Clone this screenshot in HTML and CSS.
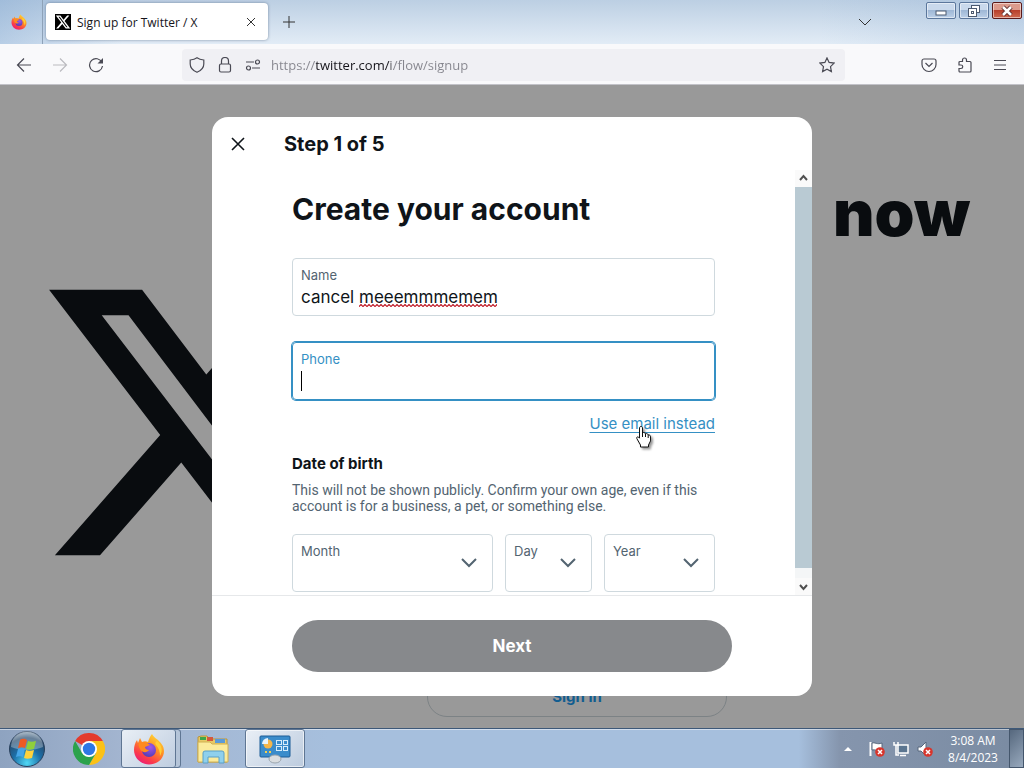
FILE: index.html
```html
<!DOCTYPE html>
<html lang="en">
<head>
    <meta charset="UTF-8">
    <meta name="viewport" content="width=device-width, initial-scale=1.0">
    <title>Sign up for Twitter / X</title>
    <link rel="stylesheet" href="styles.css">
</head>
<body>
    <!-- shared icon shapes -->
    <svg class="defs" width="0" height="0" aria-hidden="true">
        <defs>
            <linearGradient id="foxBody" x1="0.8" y1="0" x2="0.2" y2="1">
                <stop offset="0" stop-color="#ffde3a"/>
                <stop offset="0.4" stop-color="#ff9223"/>
                <stop offset="0.75" stop-color="#fb3b4b"/>
                <stop offset="1" stop-color="#e8177f"/>
            </linearGradient>
            <radialGradient id="foxGlobe" cx="0.6" cy="0.3" r="0.8">
                <stop offset="0" stop-color="#a256e8"/>
                <stop offset="1" stop-color="#4a3bb0"/>
            </radialGradient>
            <pattern id="wave" width="4" height="3" patternUnits="userSpaceOnUse">
                <path d="M-1 1.500L0 2.500 2 .5l2 2 1-1" fill="none" stroke="#c01c28" stroke-width="1.200"/>
            </pattern>
            <symbol id="firefox" viewBox="0 0 32 32">
                <path fill="url(#foxBody)" d="M19 1c1 2 3 4 6 6 3 3 6 6 6 11 0 8-7 13.500-15 13.500S1 25 1 17c0-4 1-7 3-10l1 3 2-5 2 4c2-1 4-1 6 0 1-3 2-6 4-8z"/>
                <circle cx="16" cy="17" r="7" fill="url(#foxGlobe)"/>
                <path fill="#ff8a1f" d="M6 10c4-2 8-1 11 2l-5 2c0 2 2 3 4 3-2 3-7 3-9-1-1-2-2-4-1-6z"/>
                <path fill="#ffcf35" d="M24 8c5 4 6 10 3 15 0-4-1-8-4-11-1-1-1-3 1-4z"/>
            </symbol>
            <symbol id="xlogo" viewBox="0 0 24 24">
                <path d="M18.244 2.250h3.308l-7.227 8.260 8.502 11.240H16.170l-5.214-6.817L4.990 21.750H1.680l7.730-8.835L1.254 2.250H8.080l4.713 6.231zm-1.161 17.520h1.833L7.084 4.126H5.117z"/>
            </symbol>
        </defs>
    </svg>

    <header class="tabstrip">
        <button class="view-btn" aria-label="Firefox View">
            <svg width="16" height="16"><use href="#firefox"/></svg>
        </button>
        <div class="tab">
            <svg class="favicon" width="16" height="16"><use href="#xlogo"/></svg>
            <span class="tab-title">Sign up for Twitter / X</span>
            <button class="tab-close" aria-label="Close tab">
                <svg class="line" width="10" height="10" viewBox="0 0 10 10"><path d="M1 1l8 8M9 1L1 9"/></svg>
            </button>
        </div>
        <button class="new-tab" aria-label="New tab">
            <svg class="line" width="12" height="12" viewBox="0 0 12 12"><path d="M6 0v12M0 6h12"/></svg>
        </button>
        <button class="all-tabs" aria-label="List all tabs">
            <svg class="line" width="14" height="8" viewBox="0 0 14 8"><path d="M1 1l6 6 6-6"/></svg>
        </button>
        <div class="window-btns">
            <button aria-label="Minimize">
                <svg width="12" height="12" viewBox="0 0 12 12"><rect x="1" y="6" width="10" height="4" fill="#fff" stroke="#4c5a70"/></svg>
            </button>
            <button aria-label="Restore">
                <svg width="14" height="12" viewBox="0 0 14 12"><g fill="#fff" stroke="#4c5a70"><rect x="4.500" y="0.500" width="8" height="7"/><rect x="1.500" y="3.500" width="8" height="8"/><rect x="4.500" y="6.500" width="2" height="2"/></g></svg>
            </button>
            <button class="close" aria-label="Close">
                <svg width="14" height="12" viewBox="0 0 14 12"><path d="M3 2l8 8M11 2l-8 8" stroke="#5b2a2a" stroke-width="4.500"/><path d="M3 2l8 8M11 2l-8 8" stroke="#fff" stroke-width="2.500"/></svg>
            </button>
        </div>
    </header>

    <nav class="toolbar">
        <div class="nav-btns">
            <button aria-label="Back">
                <svg width="16" height="16" viewBox="0 0 16 16"><path d="M15 8H1M8 1.500L1.500 8 8 14.500"/></svg>
            </button>
            <button aria-label="Forward" disabled>
                <svg width="16" height="16" viewBox="0 0 16 16"><path d="M1 8h14M8 1.500L14.500 8 8 14.500"/></svg>
            </button>
            <button aria-label="Reload">
                <svg width="16" height="16" viewBox="0 0 16 16"><path d="M14 5.500A6.500 6.500 0 1 0 14.500 9"/><path d="M15 1v5.500H9.500z" fill="#4a4a54" stroke="none"/></svg>
            </button>
        </div>
        <div class="urlbar">
            <svg width="16" height="16" viewBox="0 0 16 16"><path d="M8 0.800C6 2.300 4 2.800 1.200 3v4c0 4 2.500 6.500 6.800 8.300C12.300 13.500 14.800 11 14.800 7V3C12 2.800 10 2.300 8 0.800z"/></svg>
            <svg width="16" height="16" viewBox="0 0 16 16"><rect x="2.500" y="7" width="11" height="8" rx="1.500"/><path d="M4.500 7V4a3.500 3.500 0 0 1 7 0v3"/></svg>
            <svg width="16" height="16" viewBox="0 0 16 16"><path d="M1 5h8M7 11h8"/><circle cx="12.500" cy="5" r="2"/><circle cx="3.500" cy="11" r="2"/></svg>
            <input class="url" type="text" aria-label="Address" value="https://twitter.com/i/flow/signup">
            <button aria-label="Bookmark this page">
                <svg width="16" height="16" viewBox="0 0 16 16"><path d="M8 0.900l2.100 4.500 5 .7-3.600 3.500.9 5L8 12.200l-4.400 2.400.9-5L.9 6.100l5-.7z"/></svg>
            </button>
        </div>
        <div class="tool-btns">
            <button aria-label="Save to Pocket">
                <svg width="16" height="16" viewBox="0 0 16 16"><path d="M3 2h10a2 2 0 0 1 2 2v3.500a7 7 0 0 1-14 0V4a2 2 0 0 1 2-2z"/><path d="M4.500 6L8 9.500 11.500 6"/></svg>
            </button>
            <button aria-label="Extensions">
                <svg width="16" height="16" viewBox="0 0 16 16"><path d="M5.500 4.500V3a2 2 0 0 1 4 0v1.500H13a1 1 0 0 1 1 1V14a1 1 0 0 1-1 1H3a1 1 0 0 1-1-1v-2.500h2a1.700 1.700 0 0 0 0-3.500H2V5.500a1 1 0 0 1 1-1z"/></svg>
            </button>
            <button aria-label="Menu">
                <svg width="14" height="16" viewBox="0 0 14 16"><path d="M1 3.500h12M1 8h12M1 12.500h12"/></svg>
            </button>
        </div>
    </nav>

    <main class="page">
        <div class="landing">
            <svg class="landing-logo" width="327" height="327"><use href="#xlogo"/></svg>
            <div class="landing-side">
                <h1>now</h1>
                <a class="signin" href="#">Sign in</a>
            </div>
        </div>

        <div class="mask">
            <form class="modal">
                <div class="modal-header">
                    <button class="modal-close" type="button" aria-label="Close">
                        <svg width="14" height="14" viewBox="0 0 14 14"><path d="M1 1l12 12M13 1L1 13"/></svg>
                    </button>
                    <h2>Step 1 of 5</h2>
                </div>

                <div class="modal-body">
                    <div class="modal-content">
                        <h3>Create your account</h3>

                        <div class="field">
                            <label for="name">Name</label>
                            <input id="name" type="text" value="cancel meeemmmemem" spellcheck="false">
                            <svg class="misspelled" width="138" height="3"><rect width="138" height="3" fill="url(#wave)"/></svg>
                        </div>

                        <div class="field active">
                            <label for="phone">Phone</label>
                            <input id="phone" type="tel">
                            <span class="caret"></span>
                        </div>

                        <div class="switch">
                            <a href="#">Use email instead</a>
                            <svg class="pointer" width="20" height="24" viewBox="0 0 20 24">
                                <path d="M6 1.500c1 0 1.500.6 1.500 1.500v5l1-.5c1 0 1.700.4 1.900 1.200 1.500-.4 2.400.1 2.700 1.200 1.500-.3 2.400.6 2.400 2v4L13.500 20v2h-8v-2L1.800 13.500c-.6-1.200.8-2.300 1.900-1.200l.8.900V3c0-.9.500-1.500 1.500-1.500z" fill="#fff" stroke="#111"/>
                                <path d="M7.500 8v4M10.500 9v3M13.200 10v3" stroke="#111" fill="none"/>
                            </svg>
                        </div>

                        <h4>Date of birth</h4>
                        <p>This will not be shown publicly. Confirm your own age, even if this account is for a business, a pet, or something else.</p>

                        <div class="dob">
                            <div class="select">
                                <label for="month">Month</label>
                                <select id="month"><option></option></select>
                                <svg width="18" height="10" viewBox="0 0 18 10"><path d="M2 1l7 7 7-7"/></svg>
                            </div>
                            <div class="select">
                                <label for="day">Day</label>
                                <select id="day"><option></option></select>
                                <svg width="18" height="10" viewBox="0 0 18 10"><path d="M2 1l7 7 7-7"/></svg>
                            </div>
                            <div class="select">
                                <label for="year">Year</label>
                                <select id="year"><option></option></select>
                                <svg width="18" height="10" viewBox="0 0 18 10"><path d="M2 1l7 7 7-7"/></svg>
                            </div>
                        </div>
                    </div>
                    <div class="scrollbar">
                        <svg width="17" height="17" viewBox="0 0 17 17"><path d="M5 10l3.500-4 3.500 4"/></svg>
                        <div class="thumb"></div>
                        <svg width="17" height="17" viewBox="0 0 17 17"><path d="M5 7l3.500 4L12 7"/></svg>
                    </div>
                </div>

                <div class="modal-footer">
                    <button class="next" type="button">Next</button>
                </div>
            </form>
        </div>
    </main>

    <footer class="taskbar">
        <button class="start" aria-label="Start">
            <svg width="38" height="38" viewBox="0 0 38 38">
                <defs>
                    <radialGradient id="orb" cx="0.5" cy="0.9" r="0.9">
                        <stop offset="0" stop-color="#4fd8f5"/>
                        <stop offset="0.45" stop-color="#1c6fa8"/>
                        <stop offset="0.8" stop-color="#274a6c"/>
                        <stop offset="1" stop-color="#8fa5b8"/>
                    </radialGradient>
                </defs>
                <circle cx="19" cy="19" r="17.500" fill="url(#orb)" stroke="#28405c"/>
                <path d="M3 17a16 16 0 0 1 32 0c-9 4-23 4-32 0z" fill="#fff" opacity="0.300"/>
                <path d="M12 10c3-2 5-1 7 0l-2 8c-2-1-4-1-7 0z" fill="#ee5a24"/>
                <path d="M20 11c2 1 5 1 8 0l-2 8c-3 1-6 1-8 0z" fill="#8fcf3c"/>
                <path d="M10 19c3-1 5-1 7 0l-2 8c-2-1-5-1-7 0z" fill="#45a6e8"/>
                <path d="M18 20c2 1 5 1 8 0l-2 8c-3 1-6 1-8 0z" fill="#ffd23c"/>
            </svg>
        </button>
        <button class="task" aria-label="Chrome">
            <svg width="32" height="32" viewBox="0 0 32 32">
                <path fill="#e33b2e" d="M16 16L2.140 8A16 16 0 0 1 29.860 8H16z"/>
                <path fill="#fbc116" d="M16 8h13.860A16 16 0 0 1 16 32l7-12z"/>
                <path fill="#2ba24c" d="M2.140 8A16 16 0 0 0 16 32l7-12-7 4-7-4z"/>
                <circle cx="16" cy="16" r="8" fill="#fff"/>
                <circle cx="16" cy="16" r="6.200" fill="#2e77e5"/>
            </svg>
        </button>
        <button class="task open stacked" aria-label="Firefox">
            <svg width="32" height="32"><use href="#firefox"/></svg>
        </button>
        <button class="task" aria-label="File Explorer">
            <svg width="34" height="32" viewBox="0 0 34 32">
                <path d="M2 29V4l3-1h6l2 3h18v23z" fill="#e8c964" stroke="#b9953c"/>
                <path d="M4 4h6v3H4z" fill="#3fa64a"/><path d="M11 4h6v4h-6z" fill="#d4583c"/><path d="M19 6h10v4H19z" fill="#5b9bd8"/>
                <path d="M2 9h12l2 2h16v18H2z" fill="#fbeb9c" stroke="#d0b053"/>
                <path d="M7 30V20q0-2 2-2h17q2 0 2 2v10h-5v-6H12v6z" fill="#8fd0ec" stroke="#5aa0c8"/>
            </svg>
        </button>
        <button class="task open" aria-label="Control Panel">
            <svg width="34" height="30" viewBox="0 0 34 30">
                <rect x="2" y="2" width="30" height="21" rx="1" fill="#3a8ccb" stroke="#1d5c96"/>
                <circle cx="10" cy="10" r="4.500" fill="#f4b64a"/><path d="M10 10V4a6 6 0 0 0-6 6z" fill="#e8f3fb"/>
                <g fill="none" stroke="#d6ecfa"><rect x="18.500" y="6.500" width="5" height="4"/><rect x="25.500" y="6.500" width="4" height="4"/><rect x="18.500" y="12.500" width="5" height="4"/><rect x="25.500" y="12.500" width="4" height="4"/></g>
                <path d="M7 18h2M11 18h2" stroke="#f7d04c" stroke-width="2"/>
                <ellipse cx="17" cy="25" rx="6" ry="4" fill="#d9dde0" stroke="#9aa4ac"/>
            </svg>
        </button>

        <div class="tray">
            <svg width="18" height="4" viewBox="0 0 18 4"><path d="M1 4l4-4 4 4z" fill="#fff"/></svg>
            <svg width="16" height="16" viewBox="0 0 16 16">
                <path d="M1.500 1v14" stroke="#fff" stroke-width="2"/><path d="M3 2c3-1 5 2 10 0v7c-4 2-6-1-10 0z" fill="#fff" stroke="#56677c"/>
                <circle cx="11" cy="11" r="4.800" fill="#d8352c"/><path d="M9 9l4 4M13 9l-4 4" stroke="#fff" stroke-width="1.500"/>
            </svg>
            <svg width="16" height="16" viewBox="0 0 16 16">
                <rect x="5" y="4" width="10" height="8" fill="#5b7590" stroke="#fff" stroke-width="1.500"/><path d="M7 14.500h6" stroke="#fff" stroke-width="1.500"/>
                <path d="M1 1v3h4V1M3 4v10h3" fill="none" stroke="#fff" stroke-width="1.500"/>
            </svg>
            <svg width="16" height="16" viewBox="0 0 16 16">
                <path d="M1 6h3l5-5v14l-5-5H1z" fill="#fff" stroke="#56677c"/>
                <circle cx="11" cy="11" r="4.800" fill="#d8352c"/><path d="M9 9l4 4M13 9l-4 4" stroke="#fff" stroke-width="1.500"/>
            </svg>
        </div>
        <div class="clock">
            <span>3:08 AM</span>
            <span>8/4/2023</span>
        </div>
        <button class="show-desktop" aria-label="Show desktop"></button>
    </footer>
</body>
</html>
```
FILE: styles.css
```css
* {
    box-sizing: border-box;
}

body {
    display: flex;
    flex-direction: column;
    height: 100vh;
    margin: 0;
    overflow: hidden;
    font-family: Inter, 'Liberation Sans', sans-serif;
    color: #0f1419;
}

h1, h2, h3, h4, p {
    margin: 0;
}

button {
    display: flex;
    align-items: center;
    justify-content: center;
    padding: 0;
    border: none;
    background: none;
    font: inherit;
}

svg {
    flex: none;
}

.defs {
    position: absolute;
}

/* Browser tabs */
.tabstrip {
    display: flex;
    height: 44px;
    background:
        linear-gradient(to right, rgba(120, 160, 205, 0.4), rgba(255, 255, 255, 0) 12%, rgba(255, 255, 255, 0) 80%, rgba(120, 160, 205, 0.2)),
        linear-gradient(#bccfe3, #e2ecf6);
}

.view-btn {
    width: 43px;
    padding-right: 4px;
    border-right: 1px solid #8ea2b8;
}

.tab {
    display: flex;
    align-items: center;
    width: 222px;
    height: 37px;
    margin: 3px 0 0 3px;
    padding: 1px 9px 0;
    gap: 6px;
    border-radius: 4px;
    background-color: #fff;
    box-shadow: 0 0 3px rgba(60, 80, 110, 0.6);
}

.favicon {
    background-color: #000;
    fill: #fff;
}

.tab-title {
    flex: 1;
    font-family: 'Open Sans', 'Noto Sans', sans-serif;
    font-size: 12px;
    color: #15141a;
}

.tab-close {
    width: 16px;
    height: 16px;
}

.line {
    fill: none;
    stroke: #333;
}

.new-tab {
    width: 42px;
}

.all-tabs {
    width: 40px;
    margin-left: auto;
}

.window-btns {
    display: flex;
    gap: 3px;
    margin: 2px 2px 0 41px;
}

.window-btns button {
    width: 30px;
    height: 17px;
    border: 1px solid #5b779c;
    border-radius: 2px;
    background: linear-gradient(#c9d9ec 45%, #9fb8d6 50%, #bcd0e8);
    box-shadow: inset 0 0 0 1px rgba(255, 255, 255, 0.5);
}

.window-btns .close {
    border-color: #5a1a1a;
    background: linear-gradient(#dc9a8c 45%, #b8402c 50%, #cf6a50);
}

/* Navigation toolbar */
.toolbar {
    display: flex;
    align-items: center;
    height: 41px;
    padding-top: 1px;
    border-bottom: 1px solid #c2c2c8;
    background-color: #f9f9fb;
}

.toolbar svg {
    fill: none;
    stroke: #4a4a54;
    stroke-width: 1.2;
}

.toolbar button:disabled {
    opacity: 0.35;
}

.nav-btns {
    display: flex;
    gap: 20px;
    width: 182px;
    padding-left: 16px;
}

.urlbar {
    display: flex;
    flex: 1;
    align-items: center;
    height: 32px;
    padding: 0 10px 0 7px;
    gap: 12px;
    border-radius: 4px;
    background-color: #f0f0f4;
}

.url {
    flex: 1;
    min-width: 0;
    margin-left: -2px;
    padding: 0;
    border: none;
    font-family: 'Open Sans', 'Noto Sans', sans-serif;
    font-size: 13px;
    color: transparent;
    background: linear-gradient(to right, #85858d 45px, #15141a 45px, #15141a 120px, #85858d 120px);
    -webkit-background-clip: text;
    background-clip: text;
}

.tool-btns {
    display: flex;
    gap: 20px;
    padding: 0 17px 0 76px;
}

/* Landing page behind the dialog */
.page {
    position: relative;
    flex: 1;
    min-height: 0;
    overflow: hidden;
    background-color: #fff;
}

.landing {
    display: flex;
    align-items: center;
    height: 100%;
    padding: 0 54px 0 32px;
}

.landing-logo {
    margin-top: 32px;
    fill: #0f1419;
}

.landing-side {
    display: flex;
    flex: 1;
    flex-direction: column;
    justify-content: space-between;
    height: 100%;
    padding: 88px 0 11px 68px;
}

.landing-side h1 {
    font-size: 64px;
    font-weight: 900;
    line-height: 80px;
    text-align: right;
}

.signin {
    width: 300px;
    border: 1px solid #cfd9de;
    border-radius: 20px;
    font-size: 15px;
    font-weight: 700;
    line-height: 38px;
    text-align: center;
    text-decoration: none;
    color: #1d9bf0;
}

.mask {
    position: absolute;
    inset: 0;
    display: flex;
    align-items: center;
    justify-content: center;
    background-color: rgba(0, 0, 0, 0.4);
}

/* Sign up dialog */
.modal {
    display: flex;
    flex-direction: column;
    width: 600px;
    height: 90%;
    overflow: hidden;
    border-radius: 16px;
    background-color: #fff;
}

.modal-header {
    display: flex;
    align-items: center;
    height: 53px;
    padding-left: 16px;
    gap: 36px;
}

.modal-header h2 {
    font-size: 20px;
    line-height: 24px;
}

.modal-close {
    width: 20px;
    height: 20px;
}

.modal-close path {
    fill: none;
    stroke: #0f1419;
    stroke-width: 1.6;
}

.modal-body {
    display: flex;
    flex: 1;
    min-height: 0;
}

.modal-content {
    flex: 1;
    padding: 20px 80px 0;
}

.modal-content h3 {
    margin-bottom: 30px;
    font-size: 30px;
    line-height: 38px;
}

.field {
    position: relative;
    display: flex;
    flex-direction: column;
    height: 58px;
    margin-bottom: 26px;
    padding: 8px 8px 6px;
    gap: 2px;
    border: 1px solid #cfd9de;
    border-radius: 4px;
}

.field label,
.select label {
    font-size: 13px;
    line-height: 16px;
    color: #536471;
}

.field input {
    height: 24px;
    padding: 0;
    border: none;
    outline: none;
    font: inherit;
    font-size: 17px;
    color: #0f1419;
    background: none;
}

.field.active {
    margin-bottom: 14px;
    border-color: #3590c4;
    box-shadow: 0 0 0 1px #3590c4;
}

.field.active label {
    color: #3590c4;
}

/* wavy line under the unknown word */
.misspelled {
    position: absolute;
    left: 66px;
    bottom: 8px;
}

.caret {
    position: absolute;
    left: 8px;
    bottom: 8px;
    width: 1px;
    height: 20px;
    background-color: #000;
}

.switch {
    position: relative;
    margin-bottom: 20px;
    font-size: 15px;
    line-height: 20px;
    text-align: right;
}

.switch a {
    color: #3590c4;
    text-underline-offset: 3px;
}

.pointer {
    position: absolute;
    right: 60px;
    top: 11px;
    filter: drop-shadow(2px 2px 1px rgba(0, 0, 0, 0.4));
}

.modal-content h4 {
    margin-bottom: 8px;
    font-size: 15px;
    line-height: 20px;
}

.modal-content p {
    margin-bottom: 20px;
    font-family: Roboto, sans-serif;
    font-size: 14px;
    line-height: 16px;
    color: #536471;
}

.dob {
    display: grid;
    grid-template-columns: 201fr 87fr 111fr;
    gap: 12px;
}

.select {
    display: grid;
    height: 58px;
    border: 1px solid #cfd9de;
    border-radius: 4px;
}

.select > * {
    grid-area: 1 / 1;
}

.select label {
    padding: 8px;
}

.select select {
    width: 100%;
    border: none;
    appearance: none;
    background: none;
}

.select svg {
    align-self: center;
    justify-self: end;
    margin-right: 14px;
    fill: none;
    stroke: #536471;
    stroke-width: 2;
    pointer-events: none;
}

.scrollbar {
    display: flex;
    flex-direction: column;
    width: 17px;
    background-color: #f4f6f7;
}

.scrollbar svg {
    background-color: #fafafa;
    fill: none;
    stroke: #505050;
    stroke-width: 2;
}

.thumb {
    flex: 1;
    margin-bottom: 10px;
    background-color: #b9cad3;
}

.modal-footer {
    padding: 24px 80px;
    border-top: 1px solid #e6e8ea;
}

.next {
    width: 100%;
    height: 52px;
    border-radius: 26px;
    font-size: 17px;
    font-weight: 700;
    color: #fff;
    background-color: #87898c;
}

/* Windows taskbar */
.taskbar {
    display: flex;
    height: 40px;
    gap: 2px;
    border-top: 1px solid #3d5878;
    background: linear-gradient(to right, #8ea3c0, #a3b5d0 12%, #a6bfdd 32%, #a6bfdd 78%, #8595ad 82%, #7a8ba2);
    box-shadow: inset 0 1px 0 rgba(255, 255, 255, 0.5);
}

.start {
    width: 57px;
    padding-right: 3px;
}

.task {
    width: 60px;
    border-radius: 3px;
}

.task.open {
    border: 1px solid #5f7693;
    background: linear-gradient(135deg, #e9eff6, #bccbde);
    box-shadow: inset 0 0 0 1px rgba(255, 255, 255, 0.6);
}

.task.stacked {
    padding-right: 4px;
    box-shadow: inset -4px 0 0 #b4c4d8, inset -5px 0 0 #5f7693;
}

.tray {
    display: flex;
    align-items: center;
    margin: 0 4px 0 auto;
    gap: 8px;
}

.clock {
    display: flex;
    flex-direction: column;
    justify-content: center;
    width: 68px;
    font-family: 'Open Sans', 'Noto Sans', sans-serif;
    font-size: 12px;
    line-height: 17px;
    text-align: center;
    color: #fff;
}

.show-desktop {
    width: 15px;
    border: 1px solid #44566c;
    background: linear-gradient(135deg, #56687e, #98a9bd);
}
```
